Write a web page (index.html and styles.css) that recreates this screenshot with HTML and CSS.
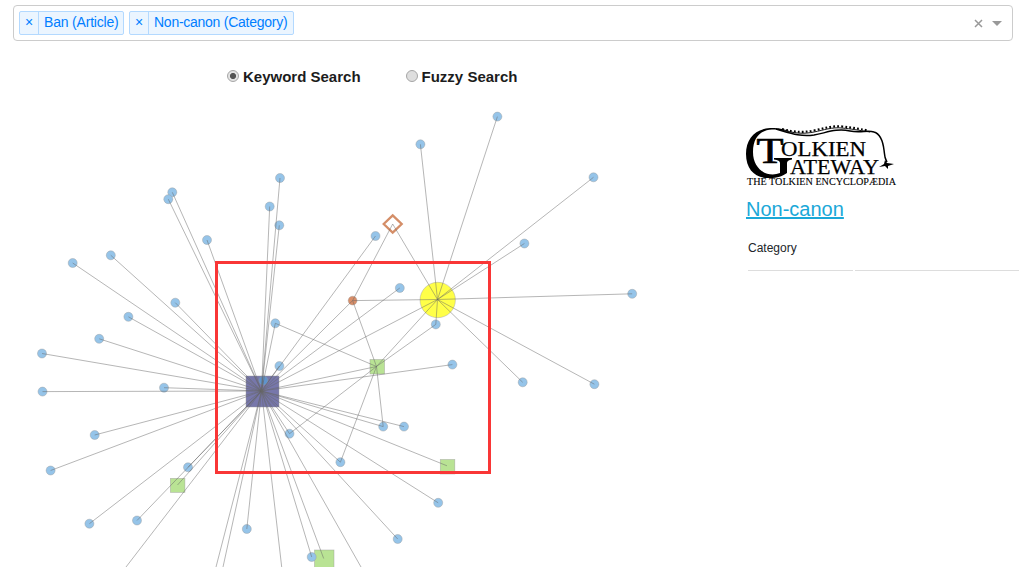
FILE: index.html
```
<!DOCTYPE html>
<html lang="en">
<head>
<meta charset="utf-8">
<title>Non-canon</title>
<link rel="stylesheet" href="styles.css">
</head>
<body>
<div class="page">
  <div class="select">
    <div class="tag"><span class="tag-remove">×</span><span class="tag-label"><span>Ban (Article)</span></span></div>
    <div class="tag"><span class="tag-remove">×</span><span class="tag-label tag-long"><span>Non-canon (Category)</span></span></div>
    <div class="select-tools">
      <svg width="9" height="9" viewBox="0 0 9 9"><path class="clear" d="M1 1L8 8M8 1L1 8"/></svg>
      <span class="arrow"></span>
    </div>
  </div>
  <div class="modes">
    <label class="mode"><span class="radio radio-on"></span>Keyword Search</label>
    <label class="mode"><span class="radio"></span>Fuzzy Search</label>
  </div>
  <main class="content">
    <svg class="graph" viewBox="0 100 732 467" width="732" height="467">
      <g id="nodes"></g>
      <g id="edges" class="edges"></g>
      <rect class="focus" x="216.5" y="262.5" width="273" height="210"/>
    </svg>
    <aside class="info">
      <svg class="logo" viewBox="744 122 156 68" width="156" height="68">
        <path d="M793 132C781 128 776 128 770 128C755 129 746 139 746 154C746 170 756 179 770 178C777 178 783 176 787 173V163Q787 160 792 159.500V158H774V159.500Q780 160 780 163V173C768 178 753 170 753 152C753 137 761 130 772 129.500C780 129 786 131 793 132Z"/>
        <path class="swoosh" d="M776 129C790 133 800 137 814 135C826 133 836 128 850 131C860 133 868 130 874 132C881 134 883 142 884 150S885 158 887 162"/>
        <path class="hair" d="M778 129C796 134 804 134 814 132S832 127 842 128S857 130 870 132"/>
        <path class="crest" d="M782 129C796 132.500 804 132.500 814 130.500S832 125.500 842 126.500S857 128.500 868 130.500"/>
        <path d="M885 160l2 3 7 1-6 2 0 3-3-3-6 1 5-3z"/>
        <text class="initial" x="756.500" y="163" font-size="35" textLength="27" lengthAdjust="spacingAndGlyphs">T</text>
        <text x="781" y="156" font-size="21.500" textLength="85" lengthAdjust="spacingAndGlyphs">OLKIEN</text>
        <text x="790" y="174" font-size="21.500" textLength="89" lengthAdjust="spacingAndGlyphs">ATEWAY</text>
        <text class="tagline" x="747" y="185" font-size="10" textLength="149" lengthAdjust="spacingAndGlyphs">THE TOLKIEN ENCYCLOPÆDIA</text>
      </svg>
      <a class="title">Non-canon</a>
      <div class="facts"><div class="cell">Category</div><div class="cell"></div></div>
    </aside>
  </main>
</div>
<script src="graph.js"></script>
</body>
</html>
```
FILE: styles.css
```
body { margin: 0; background: #fff; font-family: "Liberation Sans", Arial, sans-serif; color: #212529; }
.page { box-sizing: border-box; width: 1019px; height: 567px; padding: 5px 0 0; overflow: hidden; display: flex; flex-direction: column; }
.select { box-sizing: border-box; flex: none; width: 1000px; height: 36px; margin-left: 13px; padding: 0 10px 0 5px; display: flex; align-items: center; gap: 5px; border: 1px solid #ccc; border-radius: 4px; }
.tag { box-sizing: border-box; height: 24px; display: flex; border: 1px solid #b3d9ff; border-radius: 2px; background: #ebf5ff; color: #007eff; font-size: 14px; line-height: 21px; }
.tag-remove { width: 18px; border-right: 1px solid #b3d9ff; text-align: center; }
.tag-label { box-sizing: border-box; width: 84px; padding-left: 5px; letter-spacing: -.19px; white-space: nowrap; }
.tag-long { width: 144px; letter-spacing: -.26px; }
.select-tools { margin-left: auto; display: flex; align-items: center; gap: 9px; }
.clear { fill: none; stroke: #999; stroke-width: 1.5; }
.arrow { border: 5px solid transparent; border-top-color: #999; border-bottom: 0; margin-top: 1px; }
.modes { flex: none; height: 59px; padding-left: 227px; display: flex; align-items: flex-start; gap: 45px; }
.mode { display: flex; align-items: center; gap: 4px; padding-top: 27px; font-size: 15px; line-height: 18px; font-weight: bold; color: #1c1c1c; }
.radio { box-sizing: border-box; width: 12px; height: 12px; margin-top: -3px; border: 1px solid #a6a6a6; border-radius: 50%; background: #dedede; }
.radio-on { background: radial-gradient(circle, #555 0 2.7px, #e3e3e3 3.4px); }
.content { display: flex; }
.graph, .info { flex: none; }
.edges { stroke: #666; stroke-opacity: .48; stroke-width: 1; }
.node { stroke: #999; stroke-opacity: .6; stroke-width: .7; }
.blue { fill: #95c4e9; }
.green { fill: #b9e394; }
.yellow { fill: #ffff48; }
.navy { fill: #7777ab; }
.hub-leaf { fill: #5f93cc; }
.orange { fill: #d98e68; }
.hollow { fill: none; stroke: #d48e68; stroke-width: 2.3; }
.focus { fill: none; stroke: #f93636; stroke-width: 3; }
.info { width: 287px; padding: 22px 0 0 12px; box-sizing: border-box; display: flex; flex-direction: column; align-items: flex-start; }
.logo { display: block; font-family: "Liberation Serif", serif; fill: #000; }
.logo text { stroke: #000; stroke-width: .25; }
.logo .initial { stroke-width: .7; }
.logo .tagline { stroke-width: .1; }
.swoosh { fill: none; stroke: #000; stroke-width: 1.5; }
.hair { fill: none; stroke: #000; stroke-width: .9; }
.crest { fill: none; stroke: #000; stroke-width: 2.2; stroke-dasharray: 1.8 2.2; }
.title { margin: 7px 0 0 2px; font-size: 20px; line-height: 24px; color: #1ba8d8; text-decoration: underline; }
.facts { margin: 15px 0 0 4px; display: grid; grid-template-columns: 105px 165px; gap: 2px; font-size: 12px; line-height: 24px; }
.cell { height: 34px; border-bottom: 1px solid #ddd; }
```
FILE: graph.js
```
const svgNS = 'http://www.w3.org/2000/svg';
const hub = [261.5, 391], star = [437.5, 299.500], link = [376.5, 366.5];
const hubLeaves = [
  [280, 178], [269.7, 206.5], [279.3, 225.3], [172.3, 192.3], [168.3, 199.2], [207, 240],
  [110.8, 255.3], [72.7, 263], [175.3, 302.7], [128.4, 316.8], [99.2, 338.8], [42, 353.5],
  [42.5, 391.6], [164, 387.7], [94.7, 435], [50.6, 470.5], [89.4, 523.7], [137, 520.5],
  [188, 467.3], [246.8, 529], [311.7, 557], [397.7, 539], [438.2, 502.8], [340.4, 462.2],
  [289.5, 433.7], [383.2, 426.6], [404, 426.6], [452.4, 364.6], [399.8, 288], [375.5, 236],
  [275.3, 323.3], [279.4, 366]
];
const starLeaves = [[420.4, 144.3], [497.4, 116.6], [593.5, 177.3], [524.4, 243.5], [632.2, 293.8], [594.4, 384.2], [522.7, 382.3], [435.8, 324.4]];
const inner = [263.4, 380.5], orange = [352.6, 300.6], diamond = [392.7, 224];

function add(group, name, attrs) {
  const el = document.createElementNS(svgNS, name);
  for (const key in attrs) el.setAttribute(key, attrs[key]);
  document.getElementById(group).appendChild(el);
}
function square(x, y, w, h, color) {
  add('nodes', 'rect', { x, y, width: w, height: h, class: 'node ' + color });
}
function circle(p, r, color) {
  add('nodes', 'circle', { cx: p[0], cy: p[1], r, class: 'node ' + color });
}
function edge(a, b) {
  add('edges', 'line', { x1: a[0], y1: a[1], x2: b[0], y2: b[1] });
}

square(246, 376, 33, 31, 'navy');
square(370, 359.5, 14.5, 14.5, 'green');
square(440.3, 459.5, 14.5, 14.5, 'green');
square(170.4, 478.4, 14.5, 14, 'green');
square(314.5, 550, 19.5, 19.5, 'green');
circle([437.7, 300], 17.7, 'yellow');
hubLeaves.concat(starLeaves).forEach(p => circle(p, 4.5, 'blue'));
circle(inner, 4.5, 'hub-leaf');
circle(orange, 4.4, 'orange');
add('nodes', 'path', { d: 'M392.700 215.300L401.700 224L392.700 232.700L383.700 224Z', class: 'hollow' });

hubLeaves.forEach(p => edge(hub, p));
[[126, 567], [216, 567], [223, 567], [281.7, 567], [361, 567], [177.5, 485], [323.7, 558.5], [447, 465.8], star, link, orange, inner].forEach(p => edge(hub, p));
starLeaves.concat([orange, diamond, link]).forEach(p => edge(star, p));
[[275.3, 323.3], [435.8, 324.4], [289.5, 433.7], [340.4, 462.2], [383.2, 426.6], orange].forEach(p => edge(link, p));
edge(orange, diamond);
```
